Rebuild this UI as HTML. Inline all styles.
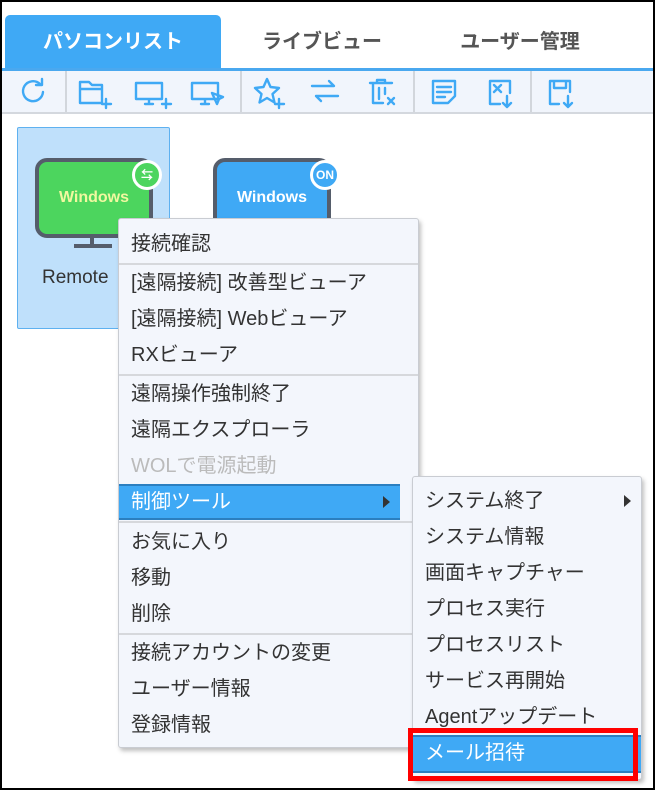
<!DOCTYPE html>
<html><head><meta charset="utf-8"><style>
*{box-sizing:border-box;margin:0;padding:0}
body{width:655px;height:790px;background:#000;position:relative;overflow:hidden;font-family:"Liberation Sans","Noto Sans CJK JP",sans-serif}
#frame{position:absolute;left:2px;top:2px;width:651px;height:786px;background:#fff}
.tab{position:absolute;top:13px;height:54px;font-size:20px;font-weight:bold;line-height:54px;text-align:center;color:#555}
.tab.on{background:#3fa9f5;color:#fff;border-radius:5px 5px 0 0}
#tb{position:absolute;left:0;top:66px;width:651px;height:46px;background:#f1f5fc;border-top:3px solid #4aa8ef;border-bottom:2px solid #d4d8de}
.sep{position:absolute;top:0;width:2px;height:41px;background:#d2d6dc}
.card{position:absolute;left:15px;top:125px;width:153px;height:202px;background:#bfe0fb;border:1px solid #5eb1f0;border-radius:2px}
.mon{position:absolute;width:118px;height:80px;border:4px solid #555d6b;border-radius:12px;color:#fff;font-weight:bold;font-size:16px;text-align:center;line-height:72px}
.stand{position:absolute;height:4px;background:#555d6b}
.badge{position:absolute;width:30px;height:30px;border-radius:50%;border:3px solid #fff;color:#fff;font-size:12px;font-weight:bold;text-align:center;line-height:24px}
.menu{position:absolute;background:#f3f6fc;border:1px solid #c9ccd2;box-shadow:2px 3px 4px rgba(0,0,0,.25);border-radius:3px}
.it{height:36px;line-height:36px;padding-left:12px;font-size:20px;color:#333;position:relative;white-space:nowrap}
.hl{background:#3fa9f5;color:#fff;border-top:2px solid #2b7fc0;border-bottom:2px solid #2b7fc0;line-height:32px}
.dis{color:#bbb}
.hr{height:2px;background:#d6d8dc;margin:1px 0 0}
.arr{position:absolute;right:10px;top:12px;width:0;height:0;border-left:7px solid #333;border-top:6px solid transparent;border-bottom:6px solid transparent}
</style></head><body><div id="frame">
<div class="tab on" style="left:3px;width:216px">パソコンリスト</div>
<div class="tab" style="left:220px;width:200px">ライブビュー</div>
<div class="tab" style="left:418px;width:200px">ユーザー管理</div>
<div id="tb">
<div class="sep" style="left:63px"></div><div class="sep" style="left:238px"></div><div class="sep" style="left:411px"></div><div class="sep" style="left:528px"></div>
<svg width="651" height="41" style="position:absolute;left:0;top:0" fill="none" stroke="#3fa9f5" stroke-width="2.4" stroke-linecap="round" stroke-linejoin="round">
<path d="M41 21a10 10 0 1 1-3-8"/><path d="M40 8v6h-6"/>
<path d="M78 11h9l3 3h10v18H78z"/><path d="M79 18h20"/><path d="M104 28v9M100 33h9"/>
<path d="M134 12h26v16h-26zM143 33h8M147 28v5"/><path d="M164 28v9M160 33h9"/>
<path d="M190 12h26v16h-26zM199 33h8M203 28v5"/><path d="M210 22l11 4-4 2-2 5z"/>
<path d="M265 8l3.5 8 8.5 1-6.5 6 2 8.5-7.5-4.5-7.5 4.5 2-8.5-6.5-6 8.5-1z"/><path d="M277 28v9M273 33h9"/>
<path d="M310 15h22l-5-5M336 25h-22l5 5"/>
<path d="M368 12h22M375 12v-3h8v3M371 12v20h10M377 17v11M383 17v6"/><path d="M386 27l6 6M392 27l-6 6"/>
<path d="M431 10h22v15l-7 7h-15zM435 16h14M435 21h14M435 26h8"/>
<path d="M488 10h20v12M488 10v23h10M492 14l7 7M499 14l-7 7"/><path d="M505 25v11M501 32l4 4 4-4"/>
<path d="M548 10h20v11M548 10v23h9M552 10v7h12v-7"/><path d="M566 25v11M562 32l4 4 4-4"/>
</svg></div>
<div class="card"></div>
<div class="mon" style="left:33px;top:156px;background:#4cd55e;color:#f0f8a0">Windows</div>
<div class="stand" style="left:88px;top:236px;width:4px;height:6px"></div>
<div class="stand" style="left:72px;top:242px;width:38px"></div>
<div class="badge" style="left:130px;top:158px;background:#4cd55e">⇆</div>
<div style="position:absolute;left:40px;top:265px;font-size:19px;color:#333">Remote</div>
<div class="mon" style="left:211px;top:156px;background:#3fa9f5">Windows</div>
<div class="badge" style="left:308px;top:158px;background:#3fa9f5">ON</div>
<div class="menu" style="left:116px;top:216px;width:301px;height:530px;padding-top:7px">
<div class="it">接続確認</div><div class="hr"></div>
<div class="it">[遠隔接続] 改善型ビューア</div><div class="it">[遠隔接続] Webビューア</div><div class="it">RXビューア</div><div class="hr"></div>
<div class="it">遠隔操作強制終了</div><div class="it">遠隔エクスプローラ</div><div class="it dis">WOLで電源起動</div>
<div class="it hl" style="margin-right:18px">制御ツール<span class="arr" style="top:10px"></span></div>
<div class="hr" style="margin:1px 0 1px"></div>
<div class="it">お気に入り</div><div class="it">移動</div><div class="it">削除</div><div class="hr"></div>
<div class="it">接続アカウントの変更</div><div class="it">ユーザー情報</div><div class="it">登録情報</div>
</div>
<div class="menu" style="left:410px;top:474px;width:230px;height:304px;padding-top:6px">
<div class="it">システム終了<span class="arr"></span></div><div class="it">システム情報</div><div class="it">画面キャプチャー</div><div class="it">プロセス実行</div><div class="it">プロセスリスト</div><div class="it">サービス再開始</div><div class="it">Agentアップデート</div>
<div class="it hl" style="height:38px">メール招待</div>
</div>
<div style="position:absolute;left:406px;top:726px;width:230px;height:53px;border:5px solid #f00"></div>
</div></body></html>
